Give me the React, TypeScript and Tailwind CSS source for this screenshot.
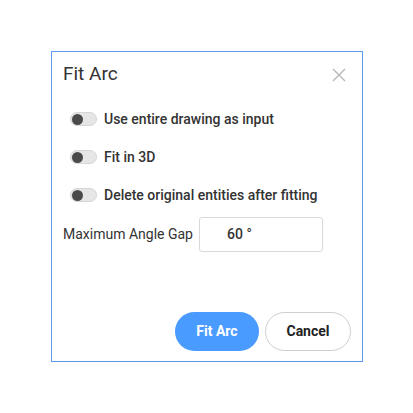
import React from "react";

function Toggle() {
  return (
    <div className="w-[27px] h-[14px] rounded-full bg-[#e6e6e6] border border-[#d6d6d6] flex items-center pl-[1px]">
      <div className="w-[11px] h-[11px] rounded-full bg-[#4a4a4a]" />
    </div>
  );
}

function Row({ label }: { label: string }) {
  return (
    <div className="flex items-center h-[20px] pl-[7px]">
      <Toggle />
      <span className="ml-[7px] text-[14px] font-medium text-[#333]">{label}</span>
    </div>
  );
}

export default function App() {
  return (
    <div className="w-[413px] h-[413px] bg-white pt-[51px] pl-[51px]" style={{ fontFamily: "Roboto, 'Liberation Sans', sans-serif" }}>
      <div className="w-[312px] h-[311px] border-[1.5px] border-[#5a9bf0] bg-white flex flex-col px-[11px]">
        <div className="flex items-center justify-between h-[44px] pt-[1px]">
          <span className="text-[19px] text-[#333]">Fit Arc</span>
          <svg width="14" height="14" viewBox="0 0 14 14" className="mr-[5px]">
            <path d="M1 1L13 13M13 1L1 13" stroke="#b5b5b5" strokeWidth="1.3" />
          </svg>
        </div>
        <div className="flex flex-col gap-[18px] mt-[13px]">
          <Row label="Use entire drawing as input" />
          <Row label="Fit in 3D" />
          <Row label="Delete original entities after fitting" />
        </div>
        <div className="flex items-center mt-[12px]">
          <span className="text-[14px] text-[#333] w-[136px]">Maximum Angle Gap</span>
          <div className="w-[124px] h-[35px] border border-[#d9d9d9] rounded-[3px] flex items-center pl-[27px] text-[14px] font-medium text-[#333]">
            60 °
          </div>
        </div>
        <div className="flex-1" />
        <div className="flex justify-end gap-[6px] pb-[10px]">
          <button className="w-[84px] h-[39px] rounded-full bg-[#4a9bff] text-white text-[14px] font-bold">Fit Arc</button>
          <button className="w-[86px] h-[39px] rounded-full bg-white border border-[#cfcfcf] text-[#222] text-[14px] font-bold">Cancel</button>
        </div>
      </div>
    </div>
  );
}
